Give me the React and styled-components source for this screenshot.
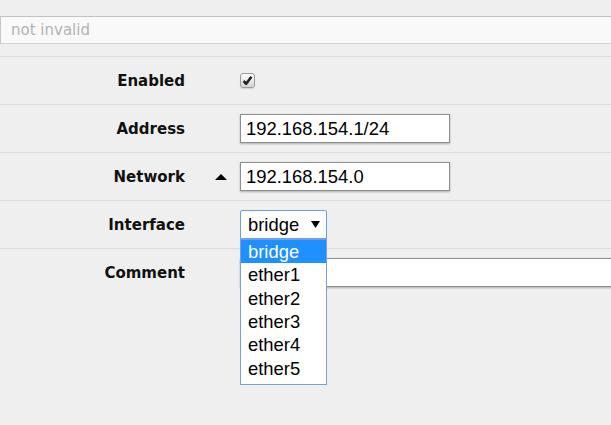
import React from "react";
import styled, { createGlobalStyle } from "styled-components";

const GlobalStyle = createGlobalStyle`
  html, body {
    margin: 0;
    padding: 0;
    background: #efefef;
    overflow: hidden;
  }
  body {
    font-family: "DejaVu Sans", Verdana, sans-serif;
  }
`;

const Page = styled.div`
  width: 611px;
  height: 425px;
  overflow: hidden;
  background: #efefef;
`;

const TopBar = styled.div`
  padding: 16px 0 12px 0;
`;

const FilterInput = styled.input`
  display: block;
  box-sizing: border-box;
  width: calc(100% + 20px);
  height: 28px;
  margin: 0;
  padding: 0 10px;
  border: 1px solid #d4d4d4;
  border-top-color: #c2c2c2;
  border-left-color: #c6c6c6;
  background: #f9f9f9;
  font-family: "DejaVu Sans", Verdana, sans-serif;
  font-size: 15px;
  color: #333;
  outline: none;
  &::placeholder {
    color: #b3b3b3;
  }
`;

const Row = styled.div`
  display: grid;
  grid-template-columns: 185px 55px minmax(0, 1fr);
  align-items: center;
  box-sizing: border-box;
  height: 48px;
  border-top: 1px solid #dbdbdb;
`;

const Label = styled.div`
  text-align: right;
  font-weight: bold;
  font-size: 15px;
  color: #111;
`;

const Side = styled.div`
  display: flex;
  justify-content: flex-end;
  align-items: center;
  padding-right: 13px;
`;

const Control = styled.div`
  display: flex;
  align-items: center;
  min-width: 0;
`;

const TextField = styled.input`
  box-sizing: border-box;
  width: ${(p) => (p.$wide ? "calc(100% + 30px)" : "210px")};
  flex-shrink: 0;
  height: 29px;
  margin: 0;
  padding: 0 5px;
  border: 1px solid #8e8e8e;
  background: #fff;
  box-shadow: 0 1px 2px rgba(0, 0, 0, 0.28);
  font-family: "Liberation Sans", Arial, sans-serif;
  font-size: 18.4px;
  color: #000;
  outline: none;
`;

const CheckBox = styled.span`
  display: inline-flex;
  align-items: center;
  justify-content: center;
  box-sizing: border-box;
  width: 15px;
  height: 15px;
  border: 1px solid #9c9c9c;
  border-radius: 3px;
  background: linear-gradient(#ffffff, #d6d6d6);
  box-shadow: 0 1px 1px rgba(0, 0, 0, 0.12);
`;

const SelectWrap = styled.div`
  position: relative;
  width: 87px;
`;

const SelectBox = styled.div`
  display: flex;
  align-items: center;
  justify-content: space-between;
  box-sizing: border-box;
  height: 29px;
  padding: 0 6px 0 7px;
  border: 1px solid #6f9de3;
  border-radius: 2px 2px 0 0;
  background: #fff;
  font-family: "Liberation Sans", Arial, sans-serif;
  font-size: 18.4px;
  color: #000;
`;

const Dropdown = styled.div`
  position: absolute;
  top: 100%;
  left: 0;
  z-index: 2;
  box-sizing: border-box;
  width: 87px;
  padding-bottom: 4px;
  border: 1px solid #7b9fdc;
  background: #fff;
`;

const Option = styled.div`
  height: 23.33px;
  line-height: 23.33px;
  padding-left: 7px;
  font-family: "Liberation Sans", Arial, sans-serif;
  font-size: 18.4px;
  color: ${(p) => (p.$active ? "#fff" : "#000")};
  background: ${(p) => (p.$active ? "#1e90ff" : "transparent")};
`;

const options = ["bridge", "ether1", "ether2", "ether3", "ether4", "ether5"];

export default function App() {
  return (
    <Page>
      <GlobalStyle />
      <TopBar>
        <FilterInput placeholder="not invalid" />
      </TopBar>

      <Row>
        <Label>Enabled</Label>
        <Side />
        <Control>
          <CheckBox>
            <svg width="11" height="11" viewBox="0 0 11 11">
              <path d="M1.6 6 L4.2 8.8 L9.4 1.8" fill="none" stroke="#222" strokeWidth="2.6" strokeLinejoin="round" />
            </svg>
          </CheckBox>
        </Control>
      </Row>

      <Row>
        <Label>Address</Label>
        <Side />
        <Control>
          <TextField defaultValue="192.168.154.1/24" />
        </Control>
      </Row>

      <Row>
        <Label>Network</Label>
        <Side>
          <svg width="12" height="6" viewBox="0 0 12 6">
            <polygon points="6,0 12,6 0,6" fill="#000" />
          </svg>
        </Side>
        <Control>
          <TextField defaultValue="192.168.154.0" />
        </Control>
      </Row>

      <Row>
        <Label>Interface</Label>
        <Side />
        <Control>
          <SelectWrap>
            <SelectBox>
              <span>bridge</span>
              <svg width="9" height="7" viewBox="0 0 9 7">
                <polygon points="0,0 9,0 4.5,7" fill="#000" />
              </svg>
            </SelectBox>
            <Dropdown>
              {options.map((o, i) => (
                <Option key={o} $active={i === 0}>
                  {o}
                </Option>
              ))}
            </Dropdown>
          </SelectWrap>
        </Control>
      </Row>

      <Row>
        <Label>Comment</Label>
        <Side />
        <Control>
          <TextField $wide />
        </Control>
      </Row>
    </Page>
  );
}
